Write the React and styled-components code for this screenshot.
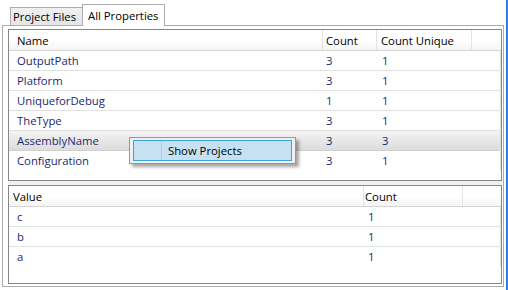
import { createGlobalStyle, styled } from 'styled-components';

const GlobalStyle = createGlobalStyle`
  body {
    margin: 0;
    background: #fff;
    font-family: "Open Sans", "Noto Sans", sans-serif;
    font-size: 11.3px;
  }
`;

const Window = styled.div`
  position: relative;
  width: 508px;
  height: 290px;
  display: flex;
  background: #fff;
  overflow: hidden;
`;

const Content = styled.div`
  flex: 1;
  min-width: 0;
  display: flex;
  flex-direction: column;
  padding: 0 0 3px 2px;
`;

const EdgeBar = styled.div`
  width: 2px;
  margin-left: 2px;
  background: #2f7fd6;
`;

const TabStrip = styled.div`
  height: 25px;
  display: flex;
  align-items: flex-end;
  padding-left: 8px;
`;

const Tab = styled.div`
  position: relative;
  box-sizing: border-box;
  width: ${({ $active }) => ($active ? '83px' : '72px')};
  height: ${({ $active }) => ($active ? '22px' : '18px')};
  margin-bottom: ${({ $active }) => ($active ? '-1px' : '0')};
  z-index: ${({ $active }) => ($active ? 2 : 1)};
  padding-left: ${({ $active }) => ($active ? '5px' : '2px')};
  display: flex;
  align-items: center;
  border: 1px solid #acacac;
  border-bottom: none;
  border-right: ${({ $active }) => ($active ? '1px solid #acacac' : 'none')};
  background: ${({ $active }) =>
    $active ? '#fff' : 'linear-gradient(#f0f0f0, #e5e5e5)'};
  color: #000;
  white-space: nowrap;
`;

const Panel = styled.div`
  flex: 1;
  display: flex;
  flex-direction: column;
  border: 1px solid #acacac;
  background: #fff;
  padding: 3px 1px 2px 5px;
`;

const Grid = styled.div`
  height: ${({ $h }) => $h}px;
  box-sizing: border-box;
  border: 1px solid #828790;
  background: #fff;
  display: flex;
  flex-direction: column;
`;

const Splitter = styled.div`
  height: 4px;
  background: #f0f0f0;
`;

const HeaderRow = styled.div`
  display: flex;
  height: 20px;
  border-bottom: 1px solid #d5d5d5;
  background: linear-gradient(#ffffff 0%, #ffffff 50%, #f4f4f4 100%);
`;

const HeaderCell = styled.div`
  box-sizing: border-box;
  width: ${({ $w }) => ($w ? `${$w}px` : 'auto')};
  flex: ${({ $w }) => ($w ? 'none' : '1')};
  padding-left: ${({ $pad }) => $pad}px;
  border-right: ${({ $w }) => ($w ? '1px solid #e3e3e3' : 'none')};
  display: flex;
  align-items: center;
  color: #000;
  white-space: nowrap;
`;

const Row = styled.div`
  display: flex;
  height: 20px;
  box-sizing: border-box;
  border-bottom: 1px solid ${({ $selected }) => ($selected ? '#cfcfcf' : '#e0e0e0')};
  border-right: 1px solid #dcdcdc;
  border-bottom-right-radius: 2px;
  background: ${({ $selected }) =>
    $selected ? 'linear-gradient(#f3f3f3, #dcdcdc)' : '#fff'};

  &:last-child {
    border-bottom-color: transparent;
  }
`;

const Cell = styled.div`
  box-sizing: border-box;
  width: ${({ $w }) => ($w ? `${$w}px` : 'auto')};
  flex: ${({ $w }) => ($w ? 'none' : '1')};
  padding-left: ${({ $pad }) => $pad}px;
  display: flex;
  align-items: center;
  color: #1b2870;
  white-space: nowrap;
`;

const Menu = styled.div`
  position: absolute;
  left: 129px;
  top: 137px;
  width: 167px;
  height: 27px;
  box-sizing: border-box;
  border: 1px solid #979797;
  background: #f0f0f0;
  padding: 2px 3px;
  box-shadow: 3px 3px 3px rgba(0, 0, 0, 0.35);
  z-index: 5;
`;

const MenuItem = styled.div`
  height: 21px;
  box-sizing: border-box;
  display: flex;
  border: 1px solid #3ca3dc;
  background: #c6e1f1;
  color: #000;
`;

const MenuGutter = styled.div`
  width: 27px;
  border-right: 1px solid #aacfe3;
`;

const MenuLabel = styled.div`
  padding-left: 6px;
  display: flex;
  align-items: center;
  white-space: nowrap;
`;

const propColumns = [
  { title: 'Name', w: 314, head: 8, pad: 8 },
  { title: 'Count', w: 54, head: 3, pad: 3 },
  { title: 'Count Unique', w: 95, head: 4, pad: 5 },
  { title: '', head: 0, pad: 0 },
];

const propRows = [
  ['OutputPath', '3', '1'],
  ['Platform', '3', '1'],
  ['UniqueforDebug', '1', '1'],
  ['TheType', '3', '1'],
  ['AssemblyName', '3', '3'],
  ['Configuration', '3', '1'],
];

const valueColumns = [
  { title: 'Value', w: 355, head: 4, pad: 8 },
  { title: 'Count', w: 99, head: 1, pad: 4 },
  { title: '', head: 0, pad: 0 },
];

const valueRows = [
  ['c', '1'],
  ['b', '1'],
  ['a', '1'],
];

function ListGrid({ columns, rows, height, selected }) {
  return (
    <Grid $h={height}>
      <HeaderRow>
        {columns.map((c, i) => (
          <HeaderCell key={i} $w={c.w} $pad={c.head}>
            {c.title}
          </HeaderCell>
        ))}
      </HeaderRow>
      {rows.map((r, ri) => (
        <Row key={ri} $selected={ri === selected}>
          {columns.map((c, ci) => (
            <Cell key={ci} $w={c.w} $pad={c.pad}>
              {r[ci] || ''}
            </Cell>
          ))}
        </Row>
      ))}
    </Grid>
  );
}

export default function App() {
  return (
    <Window>
      <GlobalStyle />
      <Content>
        <TabStrip>
          <Tab>Project Files</Tab>
          <Tab $active>All Properties</Tab>
        </TabStrip>
        <Panel>
          <ListGrid columns={propColumns} rows={propRows} height={152} selected={4} />
          <Splitter />
          <ListGrid columns={valueColumns} rows={valueRows} height={99} />
        </Panel>
      </Content>
      <EdgeBar />
      <Menu>
        <MenuItem>
          <MenuGutter />
          <MenuLabel>Show Projects</MenuLabel>
        </MenuItem>
      </Menu>
    </Window>
  );
}
